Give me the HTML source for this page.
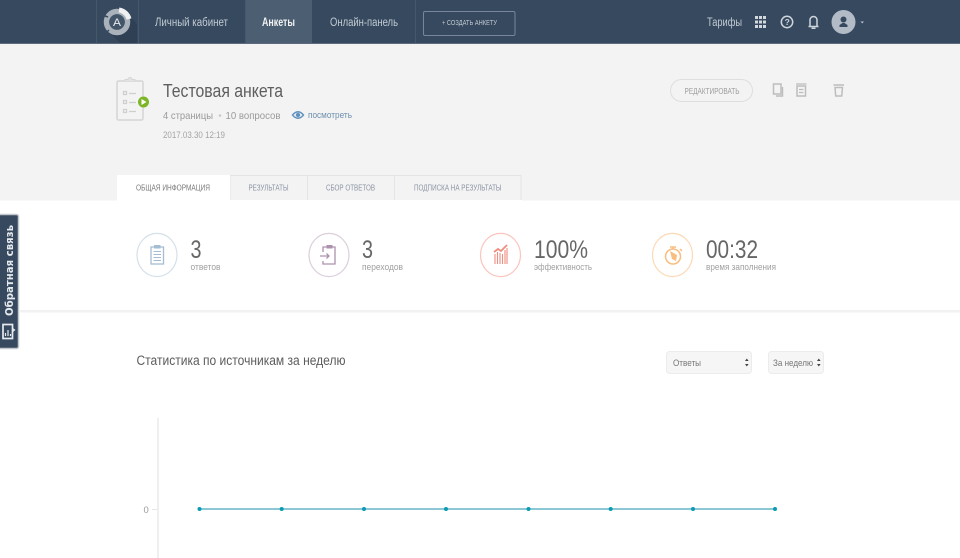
<!DOCTYPE html>
<html lang="ru"><head><meta charset="utf-8"><title>Тестовая анкета</title>
<style>
html,body{margin:0;padding:0;background:#fff;width:960px;height:558px;overflow:hidden}
svg{display:block;filter:blur(.3px)}
text{font-family:"Liberation Sans","DejaVu Sans",sans-serif}
</style></head><body>
<svg width="960" height="558" viewBox="0 0 960 558" xmlns="http://www.w3.org/2000/svg">
<rect width="960" height="558" fill="#fff"/>
<!-- header -->
<rect width="960" height="44" fill="#36495f"/>
<rect y="43" width="960" height="1" fill="#5b6b7d"/>
<rect x="246" width="66" height="43" fill="#4c5e71"/>
<g fill="#46586c">
<rect x="96" width="1" height="43"/><rect x="138" width="1" height="43"/><rect x="245" width="1" height="43"/><rect x="415" width="1" height="43"/>
</g>
<!-- logo -->
<path d="M108 31 L120 43 H137 V24 L127 13Z" fill="#2f4055"/>
<circle cx="117" cy="22" r="10.500" fill="none" stroke="#a9b2bb" stroke-width="5.500"/>
<path d="M119 10 A12 12 0 0 1 129 19" fill="none" stroke="#eef0f2" stroke-width="5"/>
<path d="M105 16 l3 1 M107 32 l2-2" stroke="#36495f" stroke-width="1.500"/>
<circle cx="117" cy="22" r="7.800" fill="#425569"/>
<text x="113" y="26" font-size="11" fill="#e8ebee" textLength="8" lengthAdjust="spacingAndGlyphs">A</text>
<text x="155" y="26" font-size="11.500" fill="#c3cbd3" textLength="73" lengthAdjust="spacingAndGlyphs">Личный кабинет</text>
<text x="262" y="26" font-size="11.500" font-weight="bold" fill="#f0f2f4" textLength="33" lengthAdjust="spacingAndGlyphs">Анкеты</text>
<text x="330" y="26" font-size="11.500" fill="#c3cbd3" textLength="68" lengthAdjust="spacingAndGlyphs">Онлайн-панель</text>
<rect x="423.500" y="11.500" width="91.500" height="24" rx="1.500" fill="none" stroke="#77869a"/>
<text x="442" y="25" font-size="7" fill="#c3cbd3" textLength="55" lengthAdjust="spacingAndGlyphs">+ СОЗДАТЬ АНКЕТУ</text>
<text x="707" y="26" font-size="11.500" fill="#c3cbd3" textLength="35" lengthAdjust="spacingAndGlyphs">Тарифы</text>
<g fill="#d3d8de">
<rect x="755" y="16" width="3" height="3"/><rect x="759" y="16" width="3" height="3"/><rect x="763" y="16" width="3" height="3"/>
<rect x="755" y="20.500" width="3" height="3"/><rect x="759" y="20.500" width="3" height="3"/><rect x="763" y="20.500" width="3" height="3"/>
<rect x="755" y="25" width="3" height="3"/><rect x="759" y="25" width="3" height="3"/><rect x="763" y="25" width="3" height="3"/>
</g>
<circle cx="787" cy="22" r="5.700" fill="none" stroke="#cfd5db" stroke-width="1.500"/>
<text x="784.600" y="25.200" font-size="8.500" font-weight="bold" fill="#cfd5db">?</text>
<path d="M810 26.500 V20 a3.500 3.500 0 0 1 7 0 V26.500 Z M808.500 26.500 H818.500" fill="none" stroke="#cfd5db" stroke-width="1.500"/>
<rect x="811.500" y="27.500" width="4" height="1.500" fill="#cfd5db"/>
<circle cx="843.500" cy="22" r="12" fill="#b3bcc6"/>
<circle cx="843.500" cy="19.500" r="3" fill="#36495f"/>
<path d="M839.500 27 v-2 l3-2 h2 l3 2 v2Z" fill="#36495f"/>
<path d="M860.500 21.500 h3.500 l-1.750 2Z" fill="#b7c0c9"/>
<!-- gray band -->
<rect y="44" width="960" height="156.500" fill="#f3f3f3"/>
<!-- survey icon -->
<rect x="117" y="81" width="26" height="39" rx="1.500" fill="none" stroke="#d5d5d5" stroke-width="1.500"/>
<path d="M125 81 v-1.500 h3 a2 2 0 0 1 4 0 h3 v1.500" fill="#e4e4e4" stroke="#d5d5d5"/>
<g fill="none" stroke="#cfcfcf" stroke-width="1.300">
<rect x="123.500" y="91.500" width="3" height="3"/><rect x="123.500" y="100.500" width="3" height="3"/><rect x="123.500" y="109.500" width="3" height="3"/>
<path d="M129 93.500 h7 M129 102.500 h7 M129 111.500 h7"/>
</g>
<circle cx="143.500" cy="102" r="5.500" fill="#7cb526"/>
<path d="M141.500 99 l5 3 -5 3Z" fill="#fff"/>
<text x="163" y="97" font-size="18" fill="#5e5e5e" textLength="120" lengthAdjust="spacingAndGlyphs">Тестовая анкета</text>
<text x="163" y="119" font-size="10.500" fill="#9a9a9a" textLength="50" lengthAdjust="spacingAndGlyphs">4 страницы</text>
<circle cx="220" cy="115.500" r="1.300" fill="#c9c9c9"/>
<text x="225.500" y="119" font-size="10.500" fill="#9a9a9a" textLength="55" lengthAdjust="spacingAndGlyphs">10 вопросов</text>
<path d="M292.500 115 Q298 108.500 303.500 115 Q298 121.500 292.500 115Z" fill="none" stroke="#5f93bf" stroke-width="1.400"/>
<circle cx="298" cy="115" r="2.200" fill="#5f93bf"/>
<text x="308" y="118" font-size="9.500" fill="#6d8fae" textLength="44" lengthAdjust="spacingAndGlyphs">посмотреть</text>
<text x="163" y="138" font-size="9" fill="#a3a3a3" textLength="62" lengthAdjust="spacingAndGlyphs">2017.03.30 12:19</text>
<!-- actions -->
<rect x="670.500" y="79.500" width="82" height="22" rx="11" fill="none" stroke="#dedede"/>
<text x="684.500" y="94" font-size="8" fill="#9c9c9c" textLength="55" lengthAdjust="spacingAndGlyphs">РЕДАКТИРОВАТЬ</text>
<g fill="none" stroke="#bdbdbd" stroke-width="1.500">
<rect x="773.500" y="84" width="7.500" height="10"/>
<path d="M782.500 87 V96 H776"/>
<rect x="797" y="86" width="8.500" height="10"/><path d="M796 84 H806.500 M799 89.500 h4.500 M799 92.500 h4.500" stroke-width="1.200"/>
<path d="M835 87.500 h7.500 l-.8 8.500 h-6Z M833.500 85 H844"/>
</g>
<!-- tabs -->
<rect x="230" y="175.500" width="291" height="25" fill="#f3f3f3" stroke="#e4e4e4"/>
<path d="M307.500 176 V200 M394.500 176 V200" stroke="#e4e4e4"/>
<rect x="117" y="175" width="113" height="26" fill="#fff"/>
<rect x="230" y="200" width="292" height="1" fill="#fff"/>
<text x="136" y="190.500" font-size="8" fill="#77787a" textLength="74" lengthAdjust="spacingAndGlyphs">ОБЩАЯ ИНФОРМАЦИЯ</text>
<text x="248.500" y="190.500" font-size="8" fill="#8a93a3" textLength="40" lengthAdjust="spacingAndGlyphs">РЕЗУЛЬТАТЫ</text>
<text x="326" y="190.500" font-size="8" fill="#8a93a3" textLength="49" lengthAdjust="spacingAndGlyphs">СБОР ОТВЕТОВ</text>
<text x="414" y="190.500" font-size="8" fill="#8a93a3" textLength="87.500" lengthAdjust="spacingAndGlyphs">ПОДПИСКА НА РЕЗУЛЬТАТЫ</text>
<!-- stats -->
<ellipse cx="157" cy="255" rx="20" ry="21.600" fill="none" stroke="#d4e0ea" stroke-width="1.200"/>
<rect x="151" y="247" width="12.500" height="17" fill="none" stroke="#a5bdd2" stroke-width="1.300"/>
<rect x="154" y="245" width="6.500" height="3.500" fill="#a5bdd2"/>
<path d="M153.500 251.500 h7.500 M153.500 254.500 h7.500 M153.500 257.500 h7.500 M153.500 260.500 h7.500" stroke="#a5bdd2"/>
<text x="190.500" y="258" font-size="25" fill="#666" textLength="11" lengthAdjust="spacingAndGlyphs">3</text>
<text x="190.500" y="270" font-size="9.500" fill="#a0a0a0" textLength="30" lengthAdjust="spacingAndGlyphs">ответов</text>

<ellipse cx="329" cy="255" rx="20" ry="21.600" fill="none" stroke="#dbcfdb" stroke-width="1.200"/>
<path d="M323 252 v-5 h12 v17 h-12 v-3" fill="none" stroke="#ad92ad" stroke-width="1.300"/>
<rect x="326.500" y="245" width="6" height="3.500" fill="#ad92ad"/>
<path d="M320 256 h9 M326.500 253.500 l2.500 2.500 -2.500 2.500" fill="none" stroke="#ad92ad" stroke-width="1.300"/>
<text x="362" y="258" font-size="25" fill="#666" textLength="11" lengthAdjust="spacingAndGlyphs">3</text>
<text x="362" y="270" font-size="9.500" fill="#a0a0a0" textLength="41" lengthAdjust="spacingAndGlyphs">переходов</text>

<ellipse cx="500.500" cy="255" rx="20" ry="21.600" fill="none" stroke="#f9c5bd" stroke-width="1.200"/>
<path d="M494 252 l4-3 3 2 6-6" fill="none" stroke="#ef8d80" stroke-width="1.800"/>
<path d="M495 254 v10 M497.500 252 v12 M500 253 v11 M502.500 254 v10 M505 250 v14 M507 248 v16" stroke="#ef8d80" stroke-width="1.100"/>
<text x="534" y="258" font-size="25" fill="#666" textLength="54" lengthAdjust="spacingAndGlyphs">100%</text>
<text x="534" y="270" font-size="9.500" fill="#a0a0a0" textLength="58" lengthAdjust="spacingAndGlyphs">эффективность</text>

<ellipse cx="672.500" cy="255" rx="20" ry="21.600" fill="none" stroke="#fdd9b5" stroke-width="1.200"/>
<circle cx="673" cy="256.500" r="7.500" fill="none" stroke="#f9bd7f" stroke-width="1.500"/>
<path d="M670 247 h6 M673 247 v2 M680 249 l2 2" stroke="#f9bd7f" stroke-width="1.500"/>
<path d="M670 251 l7 4 -1 6 -4-2Z" fill="#f9bd7f"/>
<text x="706" y="258" font-size="25" fill="#666" textLength="52" lengthAdjust="spacingAndGlyphs">00:32</text>
<text x="706" y="270" font-size="9.500" fill="#a0a0a0" textLength="70" lengthAdjust="spacingAndGlyphs">время заполнения</text>
<rect x="20" y="310" width="940" height="2.500" fill="#f2f2f2"/>
<!-- feedback -->
<rect x="-3" y="214.500" width="21.500" height="134" rx="2" fill="#36495f" stroke="#c4c8cc" stroke-width="1.500"/>
<text transform="translate(13 316) rotate(-90)" font-size="10.500" font-weight="bold" fill="#e6eaee" textLength="91" lengthAdjust="spacingAndGlyphs" style="font-family:'DejaVu Sans',sans-serif">Обратная связь</text>
<rect x="3" y="324.500" width="9.500" height="14" fill="none" stroke="#e6eaee" stroke-width="1.700"/>
<path d="M5.500 336 v-3 M8 336 v-6 M10.500 336 v-2" stroke="#e6eaee" stroke-width="1.200"/>
<path d="M13 328 l2.500 2 -2.500 2Z" fill="#e6eaee"/>
<!-- stats heading -->
<text x="136.500" y="365" font-size="13.500" fill="#5c5c5c" textLength="209" lengthAdjust="spacingAndGlyphs">Статистика по источникам за неделю</text>
<rect x="666.500" y="351.500" width="85" height="22" rx="3" fill="#f6f6f6" stroke="#ececec"/>
<text x="673" y="366" font-size="9.500" fill="#777" textLength="28" lengthAdjust="spacingAndGlyphs">Ответы</text>
<path d="M745 361 l1.800-2.500 1.800 2.500Z M745 364 l1.800 2.500 1.800-2.500Z" fill="#444"/>
<rect x="768.500" y="351.500" width="55" height="22" rx="3" fill="#f6f6f6" stroke="#ececec"/>
<text x="773" y="366" font-size="9.500" fill="#777" textLength="40" lengthAdjust="spacingAndGlyphs">За неделю</text>
<path d="M817 361 l1.800-2.500 1.800 2.500Z M817 364 l1.800 2.500 1.800-2.500Z" fill="#444"/>
<!-- chart -->
<rect x="157" y="418" width="2" height="140" fill="#efefef"/>
<rect x="152" y="509" width="5" height="1" fill="#e6e6e6"/>
<text x="143.500" y="513" font-size="9.500" fill="#9b9b9b">0</text>
<rect x="199" y="508" width="576" height="2" fill="#8cc7d5"/>
<g fill="#0b9cb4">
<circle cx="199.500" cy="509" r="2"/><circle cx="281.700" cy="509" r="2"/><circle cx="364" cy="509" r="2"/><circle cx="446" cy="509" r="2"/><circle cx="528.500" cy="509" r="2"/><circle cx="610.700" cy="509" r="2"/><circle cx="693" cy="509" r="2"/><circle cx="775" cy="509" r="2"/>
</g>
</svg>
</body></html>
